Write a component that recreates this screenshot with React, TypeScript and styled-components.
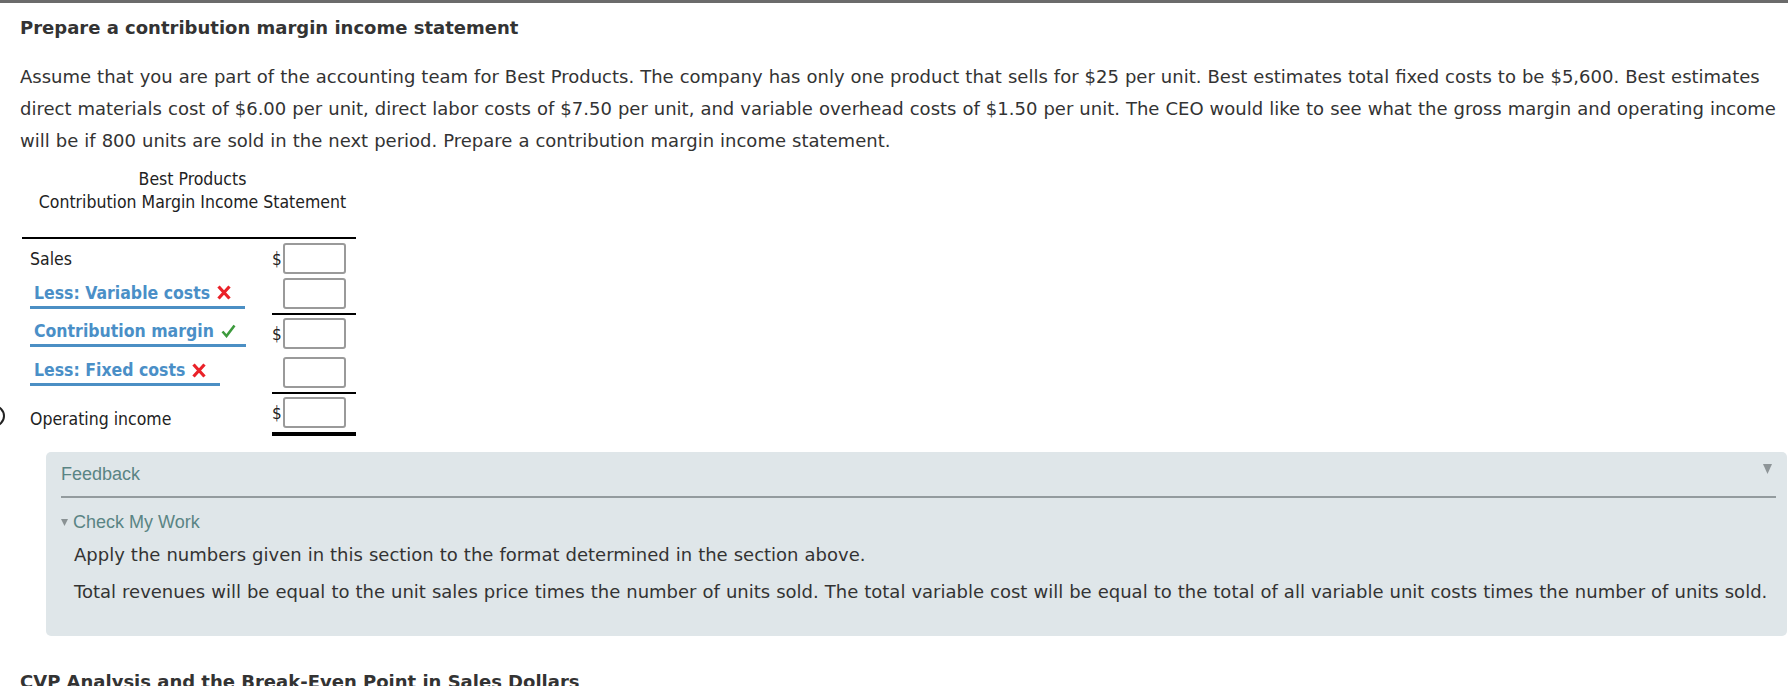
import React from "react";
import styled, { createGlobalStyle } from "styled-components";

const GlobalStyle = createGlobalStyle`
  html, body { margin: 0; padding: 0; background: #ffffff; }
  body { overflow: hidden; }
`;

const Page = styled.div`
  position: relative;
  border-top: 3px solid #6b6b6b;
  padding: 0 0 0 20px;
  color: #333333;
  font-family: "DejaVu Sans", Verdana, sans-serif;
  height: 683px;
  overflow: hidden;
`;

const Title = styled.h2`
  margin: 13px 0 0;
  font-size: 18px;
  line-height: 24px;
  font-weight: 700;
  color: #333333;
`;

const Prompt = styled.p`
  margin: 21px 0 0;
  font-size: 18px;
  line-height: 32px;
  word-spacing: 0.3px;
`;

const Statement = styled.div`
  margin-left: 2px;
  width: 334px;
  font-family: "DejaVu Sans Condensed", "DejaVu Sans", sans-serif;
  font-stretch: semi-condensed;
  font-size: 17.5px;
  color: #222222;
`;

const Heading = styled.div`
  margin-top: 11px;
  padding-left: 7px;
  text-align: center;
  line-height: 23px;
`;

const Table = styled.div`
  margin-top: 23px;
  border-top: 2px solid #000;
  display: flex;
  flex-direction: column;
`;

const Row = styled.div`
  display: flex;
  align-items: stretch;
`;

const LabelCell = styled.div<{ $shift?: number }>`
  flex: 1;
  display: flex;
  align-items: center;
  padding-left: 8px;
  padding-top: ${(p) => p.$shift || 0}px;
`;

const AmountCell = styled.div<{ $top?: boolean; $bottom?: boolean; $pt?: number; $pb?: number }>`
  width: 84px;
  display: flex;
  align-items: center;
  padding: ${(p) => p.$pt ?? 3}px 10px ${(p) => p.$pb ?? 3}px 0;
  border-top: ${(p) => (p.$top ? "2px solid #000" : "none")};
  border-bottom: ${(p) => (p.$bottom ? "4px solid #000" : "none")};
  box-sizing: border-box;
`;

const Dollar = styled.span`
  width: 11px;
  line-height: 20px;
  font-size: 17px;
`;

const Box = styled.div`
  margin-left: auto;
  width: 63px;
  height: 31px;
  box-sizing: border-box;
  border: 2px solid #9a9a9a;
  border-radius: 3px;
  background: #fff;
`;

const PlainLabel = styled.span`
  line-height: 22px;
`;

const Chosen = styled.span<{ $pad: number }>`
  display: inline-flex;
  align-items: center;
  gap: 7px;
  padding: 0 ${(p) => p.$pad}px 2px 4px;
  border-bottom: 3px solid #4b8fc4;
  color: #4a8fc7;
  font-weight: 700;
  line-height: 22px;
`;

const Mark = styled.svg`
  flex: none;
`;

const Radio = styled.div`
  position: absolute;
  left: -17px;
  top: 402px;
  width: 18px;
  height: 18px;
  border: 2.5px solid #222;
  border-radius: 50%;
`;

const Feedback = styled.div`
  margin: 16px 1px 0 26px;
  padding: 0 11px 29px 15px;
  background: #dfe6e9;
  border-radius: 5px;
  font-family: "Liberation Sans", Arial, sans-serif;
`;

const FeedbackHead = styled.div`
  height: 44px;
  display: flex;
  align-items: center;
  justify-content: space-between;
  border-bottom: 2px solid #939b9e;
  color: #5a8484;
  font-size: 18px;
`;

const HeadArrow = styled.span`
  align-self: flex-start;
  margin: 12px 4px 0 0;
  display: flex;
`;

const CheckHead = styled.div`
  margin-top: 13px;
  display: flex;
  align-items: center;
  gap: 5px;
  line-height: 22px;
  font-size: 18px;
  color: #5a8484;
`;

const Hint = styled.p`
  margin: 7px 0 0;
  padding-left: 13px;
  font-family: "DejaVu Sans", Verdana, sans-serif;
  font-size: 18px;
  line-height: 30px;
  word-spacing: 0.3px;
  color: #333333;
`;

const NextTitle = styled(Title)`
  margin-top: 34px;
`;

const XMark = () => (
  <Mark width="14" height="15" viewBox="0 0 14 15">
    <path d="M1.5 1.5 L12.5 13.5 M12.5 1.5 L1.5 13.5" stroke="#ea2229" strokeWidth="3.2" strokeLinecap="butt" />
  </Mark>
);

const CheckMark = () => (
  <Mark width="15" height="14" viewBox="0 0 15 14">
    <path d="M1.5 7.5 L5.5 12 L13.5 1.5" stroke="#3c9a3c" strokeWidth="2.6" fill="none" strokeLinejoin="miter" />
  </Mark>
);

const Tri = ({ w, h, color }: { w: number; h: number; color: string }) => (
  <svg width={w} height={h} viewBox={`0 0 ${w} ${h}`}>
    <polygon points={`0,0 ${w},0 ${w / 2},${h}`} fill={color} />
  </svg>
);

export default function App() {
  return (
    <>
      <GlobalStyle />
      <Page>
        <Title>Prepare a contribution margin income statement</Title>
        <Prompt>
          Assume that you are part of the accounting team for Best Products. The company has only one product that
          sells for $25 per unit. Best estimates total fixed costs to be $5,600. Best estimates direct materials cost of
          $6.00 per unit, direct labor costs of $7.50 per unit, and variable overhead costs of $1.50 per unit. The CEO
          would like to see what the gross margin and operating income will be if 800 units are sold in the next
          period. Prepare a contribution margin income statement.
        </Prompt>

        <Statement>
          <Heading>
            Best Products
            <br />
            Contribution Margin Income Statement
          </Heading>
          <Table>
            <Row>
              <LabelCell $shift={2}>
                <PlainLabel>Sales</PlainLabel>
              </LabelCell>
              <AmountCell $pt={4} $pb={3}>
                <Dollar>$</Dollar>
                <Box />
              </AmountCell>
            </Row>
            <Row>
              <LabelCell>
                <Chosen $pad={14}>
                  Less: Variable costs
                  <XMark />
                </Chosen>
              </LabelCell>
              <AmountCell $pt={1} $pb={4}>
                <Box />
              </AmountCell>
            </Row>
            <Row>
              <LabelCell>
                <Chosen $pad={10}>
                  Contribution margin
                  <CheckMark />
                </Chosen>
              </LabelCell>
              <AmountCell $top $pt={3} $pb={4}>
                <Dollar>$</Dollar>
                <Box />
              </AmountCell>
            </Row>
            <Row>
              <LabelCell>
                <Chosen $pad={14}>
                  Less: Fixed costs
                  <XMark />
                </Chosen>
              </LabelCell>
              <AmountCell $pt={4} $pb={4}>
                <Box />
              </AmountCell>
            </Row>
            <Row>
              <LabelCell $shift={10}>
                <PlainLabel>Operating income</PlainLabel>
              </LabelCell>
              <AmountCell $top $bottom $pt={3} $pb={4}>
                <Dollar>$</Dollar>
                <Box />
              </AmountCell>
            </Row>
          </Table>
        </Statement>
        <Radio />

        <Feedback>
          <FeedbackHead>
            <span>Feedback</span>
            <HeadArrow>
              <Tri w={9} h={10} color="#8e9598" />
            </HeadArrow>
          </FeedbackHead>
          <CheckHead>
            <Tri w={7} h={7} color="#8a9294" />
            <span>Check My Work</span>
          </CheckHead>
          <Hint>Apply the numbers given in this section to the format determined in the section above.</Hint>
          <Hint>
            Total revenues will be equal to the unit sales price times the number of units sold. The total variable cost
            will be equal to the total of all variable unit costs times the number of units sold.
          </Hint>
        </Feedback>

        <NextTitle>CVP Analysis and the Break-Even Point in Sales Dollars</NextTitle>
      </Page>
    </>
  );
}
